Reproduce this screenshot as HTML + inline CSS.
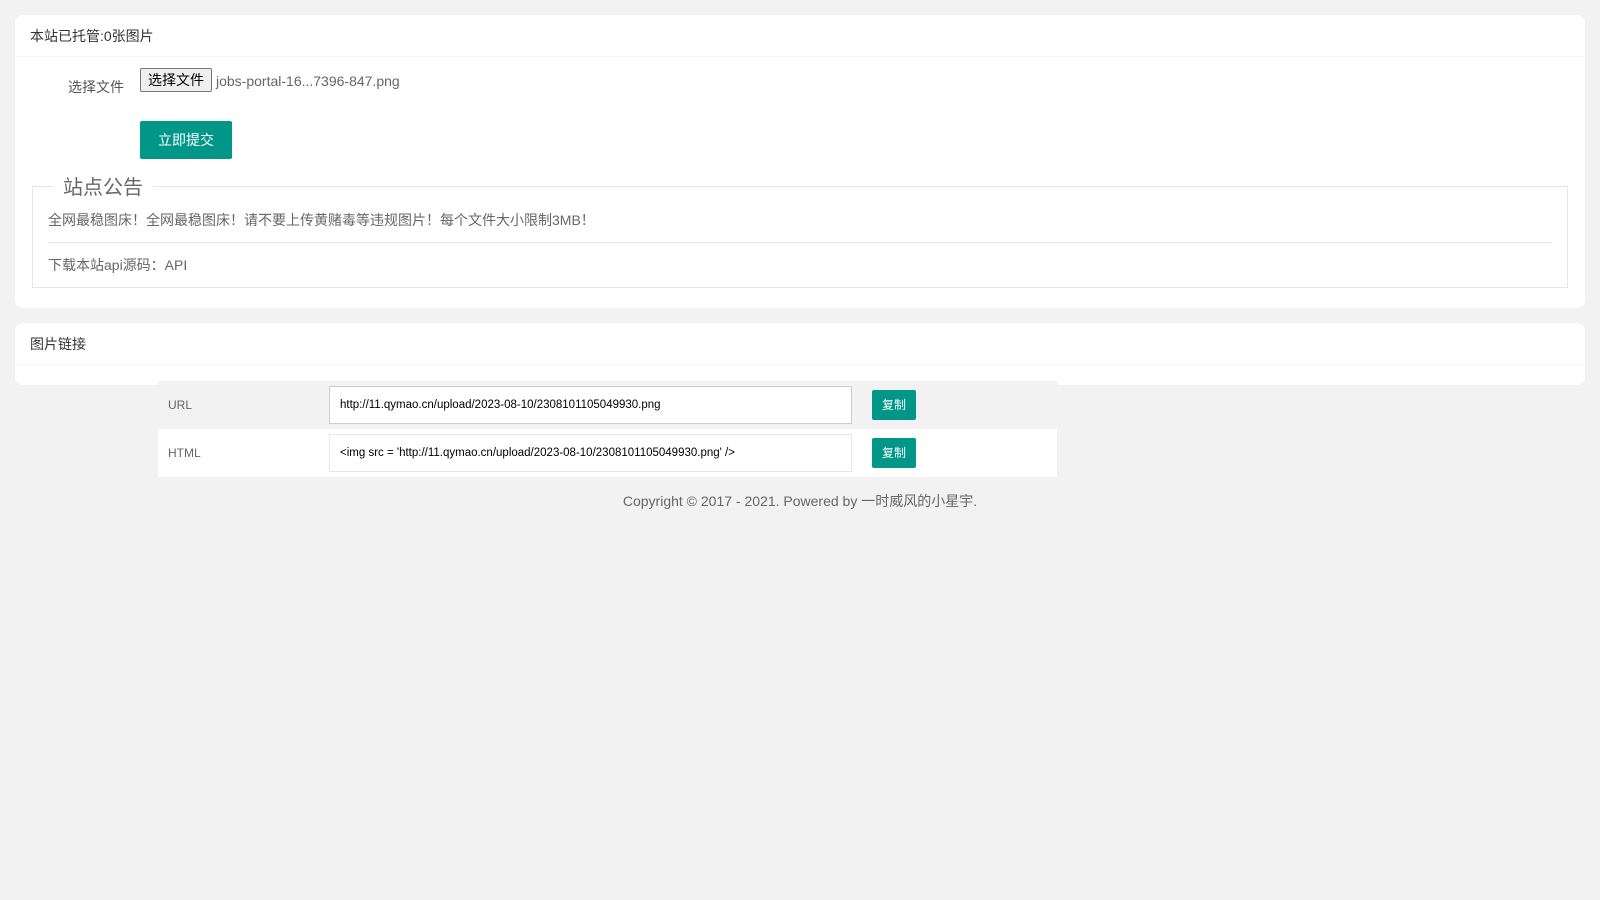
<!DOCTYPE html>
<html><head><meta charset="utf-8"><style>
*{box-sizing:border-box;margin:0;padding:0}
body{width:1600px;height:900px;background:#f2f2f2;font-family:"Liberation Sans","Noto Sans CJK SC",sans-serif;color:#333;position:relative;overflow:hidden}
.card{position:absolute;left:15px;width:1570px;background:#fff;border-radius:8px}
.hd{height:42px;border-bottom:1px solid #f6f6f6;padding-left:15px;line-height:42px;font-size:14px}
.abs{position:absolute}
.btn{background:#009688;color:#fff;border-radius:2px;text-align:center}
</style></head><body>
<div class="card" style="top:15px;height:293px">
 <div class="hd">本站已托管:0张图片</div>
 <div class="abs" style="left:53px;top:62px;font-size:14px;color:#555">选择文件</div>
 <div class="abs" style="left:125px;top:53px;width:72px;height:24px;border:1px solid #767676;background:#efefef;border-radius:2px;font-size:14px;line-height:22px;text-align:center;color:#000">选择文件</div>
 <div class="abs" style="left:201px;top:58px;font-size:14px;color:#666">jobs-portal-16...7396-847.png</div>
 <div class="abs btn" style="left:125px;top:106px;width:92px;height:38px;line-height:38px;font-size:14px">立即提交</div>
 <div class="abs" style="left:17px;top:171px;width:1536px;height:102px;border:1px solid #e6e6e6"></div>
 <div class="abs" style="left:38px;top:156px;padding:0 10px;background:#fff;font-size:20px;color:#666">站点公告</div>
 <div class="abs" style="left:33px;top:195px;font-size:14px;color:#666">全网最稳图床！全网最稳图床！请不要上传黄赌毒等违规图片！每个文件大小限制3MB！</div>
 <div class="abs" style="left:33px;top:227px;width:1504px;border-top:1px solid #e6e6e6"></div>
 <div class="abs" style="left:33px;top:240px;font-size:14px;color:#666">下载本站api源码：API</div>
</div>
<div class="card" style="top:323px;height:62px">
 <div class="hd">图片链接</div>
</div>
<div class="abs" style="left:158px;top:381px;width:899px;height:48px;background:#f2f2f2"></div>
<div class="abs" style="left:158px;top:429px;width:899px;height:48px;background:#fff"></div>
<div class="abs" style="left:168px;top:398px;font-size:12px;color:#666">URL</div>
<div class="abs" style="left:168px;top:446px;font-size:12px;color:#666">HTML</div>
<div class="abs" style="left:329px;top:386px;width:523px;height:38px;border:1px solid #ccc;background:#fff;font-size:11.5px;line-height:37px;padding-left:10px;color:#000">http://11.qymao.cn/upload/2023-08-10/2308101105049930.png</div>
<div class="abs" style="left:329px;top:434px;width:523px;height:38px;border:1px solid #e6e6e6;background:#fff;font-size:11.5px;line-height:37px;padding-left:10px;color:#000">&lt;img src = 'http://11.qymao.cn/upload/2023-08-10/2308101105049930.png' /&gt;</div>
<div class="abs btn" style="left:872px;top:390px;width:44px;height:30px;line-height:30px;font-size:12px">复制</div>
<div class="abs btn" style="left:872px;top:438px;width:44px;height:30px;line-height:30px;font-size:12px">复制</div>
<div class="abs" style="left:0;width:1600px;top:491px;text-align:center;font-size:14px;color:#666">Copyright © 2017 - 2021. Powered by 一时威风的小星宇.</div>
</body></html>
